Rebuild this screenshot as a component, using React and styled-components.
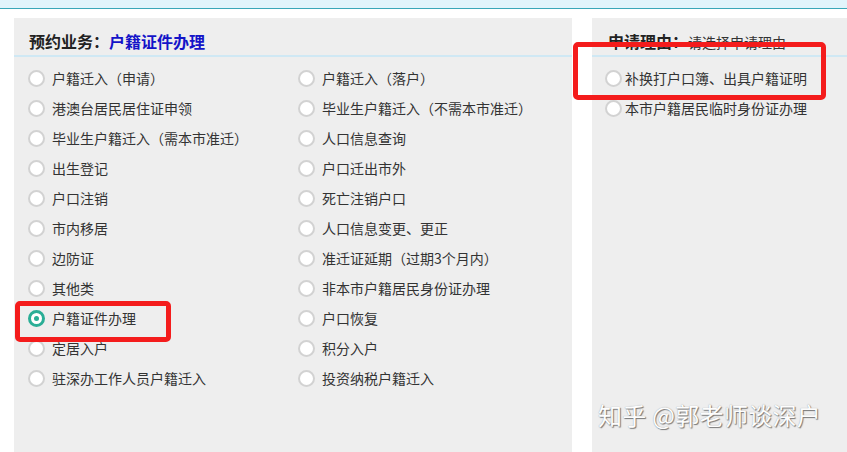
import React, { useState } from "react";
import styled, { createGlobalStyle } from "styled-components";

const GlobalStyle = createGlobalStyle`
  body {
    margin: 0;
    background: #fff;
    font-family: "Noto Sans CJK SC", "Noto Sans", sans-serif;
    color: #333;
  }
`;

const Page = styled.div`
  position: relative;
  width: 847px;
  height: 452px;
  overflow: hidden;
`;

const TopBar = styled.div`
  height: 8px;
  background: #e2f4fb;
  border-bottom: 1px solid #3ba7b8;
`;

const Main = styled.div`
  display: flex;
  gap: 20px;
  padding: 9px 0 0 14px;
`;

const Panel = styled.div`
  width: ${(p) => p.width}px;
  height: 440px;
  background: #eeeeee;
  flex-shrink: 0;
`;

const PanelHeader = styled.div`
  height: 39px;
  box-sizing: border-box;
  border-bottom: 2px solid #cfe8f4;
  padding: 12px 0 0 ${(p) => p.indent}px;
  font-size: 16px;
  font-weight: 700;
  line-height: 22px;
  color: #222;
  white-space: nowrap;
`;

const Highlight = styled.span`
  color: #1414c8;
`;

const Hint = styled.span`
  font-size: 14px;
  font-weight: 400;
  color: #333;
`;

const Options = styled.div`
  display: grid;
  grid-template-columns: ${(p) => p.cols};
  grid-auto-rows: 30px;
  padding: 6px 0 0 ${(p) => p.indent}px;
`;

const Option = styled.label`
  display: flex;
  align-items: center;
  gap: ${(p) => p.gap}px;
  font-size: 14px;
  color: #333;
  cursor: pointer;
  white-space: nowrap;
`;

const Radio = styled.span`
  width: 17px;
  height: 17px;
  box-sizing: border-box;
  border-radius: 50%;
  flex-shrink: 0;
  border: ${(p) => (p.checked ? "3px solid #2aae96" : "2px solid #d2d2d2")};
  background: #fff;
  display: flex;
  align-items: center;
  justify-content: center;
  &::after {
    content: "";
    width: 5px;
    height: 5px;
    border-radius: 50%;
    background: ${(p) => (p.checked ? "#2aae96" : "transparent")};
  }
`;

const Mark = styled.div`
  position: absolute;
  box-sizing: border-box;
  border: 5px solid #f41c1c;
  border-radius: 5px;
`;

const Watermark = styled.div`
  position: absolute;
  left: 598px;
  top: 397px;
  font-size: 24px;
  letter-spacing: 0.3px;
  color: #fdfdfd;
  text-shadow: 1px 1px 1px #777, 0 0 1px #999;
`;

const services = [
  "户籍迁入（申请）",
  "户籍迁入（落户）",
  "港澳台居民居住证申领",
  "毕业生户籍迁入（不需本市准迁）",
  "毕业生户籍迁入（需本市准迁）",
  "人口信息查询",
  "出生登记",
  "户口迁出市外",
  "户口注销",
  "死亡注销户口",
  "市内移居",
  "人口信息变更、更正",
  "边防证",
  "准迁证延期（过期3个月内）",
  "其他类",
  "非本市户籍居民身份证办理",
  "户籍证件办理",
  "户口恢复",
  "定居入户",
  "积分入户",
  "驻深办工作人员户籍迁入",
  "投资纳税户籍迁入",
];

const reasons = ["补换打户口簿、出具户籍证明", "本市户籍居民临时身份证办理"];

const App = () => {
  const [service, setService] = useState("户籍证件办理");
  const [reason, setReason] = useState(null);

  return (
    <>
      <GlobalStyle />
      <Page>
        <TopBar />
        <Main>
          <Panel width={558}>
            <PanelHeader indent={15}>
              预约业务：<Highlight>{service}</Highlight>
            </PanelHeader>
            <Options cols="270px 270px" indent={14}>
              {services.map((s) => (
                <Option key={s} gap={7} onClick={() => setService(s)}>
                  <Radio checked={service === s} />
                  {s}
                </Option>
              ))}
            </Options>
          </Panel>
          <Panel width={260}>
            <PanelHeader indent={16}>
              申请理由：<Hint>请选择申请理由</Hint>
            </PanelHeader>
            <Options cols="1fr" indent={13}>
              {reasons.map((r) => (
                <Option key={r} gap={3} onClick={() => setReason(r)}>
                  <Radio checked={reason === r} />
                  {r}
                </Option>
              ))}
            </Options>
          </Panel>
        </Main>
        <Mark style={{ left: 15, top: 301, width: 156, height: 41 }} />
        <Mark style={{ left: 573, top: 42, width: 253, height: 58 }} />
        <Watermark>知乎 @郭老师谈深户</Watermark>
      </Page>
    </>
  );
};

export default App;
